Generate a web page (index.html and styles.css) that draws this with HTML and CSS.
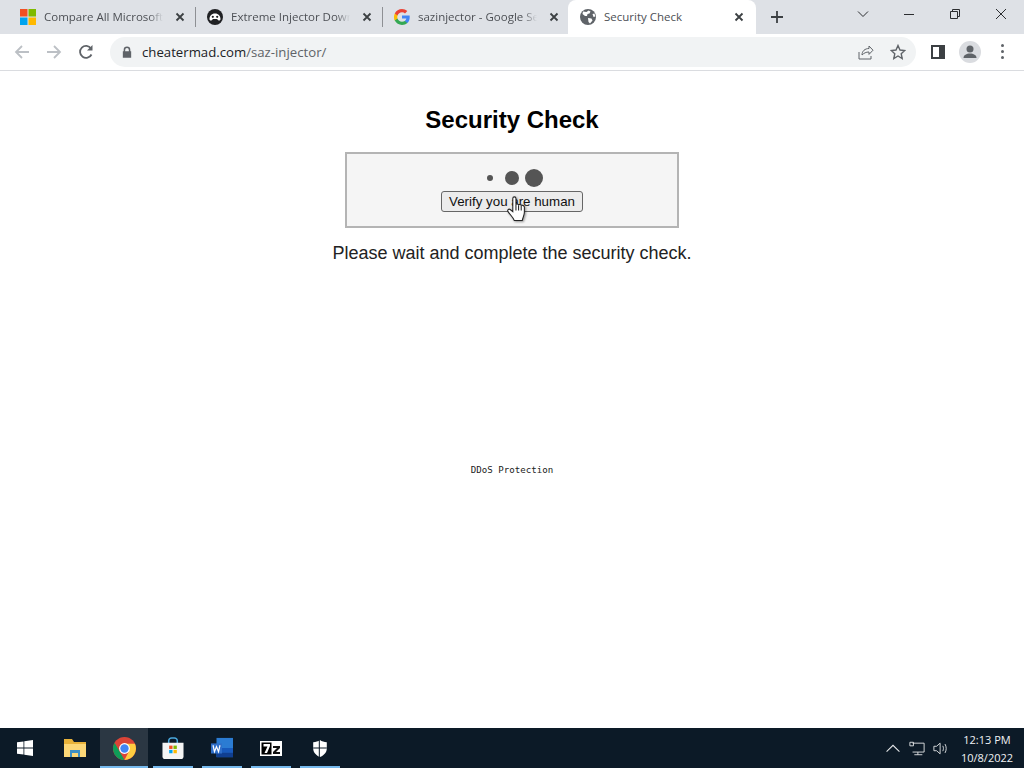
FILE: index.html
```html
<!DOCTYPE html>
<html lang="en">
<head>
    <meta charset="UTF-8">
    <title>Security Check</title>
    <link rel="stylesheet" href="styles.css">
</head>
<body>
    <div class="tabstrip">
        <div class="tab">
            <svg class="favicon" viewBox="0 0 16 16"><rect width="7.5" height="7.5" fill="#f25022"/><rect x="8.5" width="7.5" height="7.5" fill="#7fba00"/><rect y="8.5" width="7.5" height="7.5" fill="#00a4ef"/><rect x="8.5" y="8.5" width="7.5" height="7.5" fill="#ffb900"/></svg>
            <span class="tab-title">Compare All Microsoft</span>
            <svg class="tab-close" viewBox="0 0 10 10"><path d="M1.5 1.5l7 7M8.5 1.5l-7 7"/></svg>
        </div>
        <div class="tab">
            <svg class="favicon" viewBox="0 0 16 16"><circle cx="8" cy="8" r="8" fill="#202124"/><path d="M2.500 10c0-3 2-5.500 5.500-5.500s5.500 2.500 5.500 5.500c0 1.500-1.500 2-2.500 1l-1-1H6l-1 1c-1 1-2.500.5-2.500-1z" fill="#fff"/><circle cx="5.800" cy="7.800" r="1.100" fill="#202124"/><circle cx="10.200" cy="7.800" r="1.100" fill="#202124"/></svg>
            <span class="tab-title">Extreme Injector Downl</span>
            <svg class="tab-close" viewBox="0 0 10 10"><path d="M1.5 1.5l7 7M8.5 1.5l-7 7"/></svg>
        </div>
        <div class="tab">
            <svg class="favicon" viewBox="0 0 16 16"><path d="M15.700 8.200c0-.6 0-1.100-.1-1.600H8v3h4.400c-.2 1-.8 1.800-1.600 2.400v2h2.600c1.500-1.400 2.300-3.400 2.300-5.800z" fill="#4285f4"/><path d="M8 16c2.200 0 4-.7 5.400-2l-2.600-2c-.7.500-1.600.8-2.800.8-2.100 0-3.900-1.400-4.500-3.300H.8v2.100C2.100 14.200 4.900 16 8 16z" fill="#34a853"/><path d="M3.500 9.500c-.3-1-.3-2 0-3V4.400H.8c-1.100 2.200-1.100 5 0 7.200z" fill="#fbbc05"/><path d="M8 3.200c1.200 0 2.200.4 3 1.200l2.300-2.300C11.900.8 10.100 0 8 0 4.900 0 2.100 1.800.8 4.400l2.700 2.100C4.100 4.600 5.900 3.200 8 3.200z" fill="#ea4335"/></svg>
            <span class="tab-title">sazinjector - Google Search</span>
            <svg class="tab-close" viewBox="0 0 10 10"><path d="M1.5 1.5l7 7M8.5 1.5l-7 7"/></svg>
        </div>
        <div class="tab active">
            <svg class="favicon" viewBox="0 0 16 16"><circle cx="8" cy="8" r="8" fill="#5f6368"/><path d="M3 2.500l3.500.5 2-1.500 2 1-1 2-2 .5-.5 2H5L2.500 5zM8 9l3.500.5 1 2-2.500 3-1.500-1.500zM12.500 5l2-.5.8 3-1.800.5z" fill="#fff"/></svg>
            <span class="tab-title">Security Check</span>
            <svg class="tab-close" viewBox="0 0 10 10"><path d="M1.5 1.5l7 7M8.5 1.5l-7 7"/></svg>
        </div>
        <svg class="new-tab" viewBox="0 0 14 14"><path d="M7 1v12M1 7h12"/></svg>
        <div class="window-controls">
            <svg class="win-icon chevron" viewBox="0 0 12 12"><path d="M1 3.500l5 5 5-5"/></svg>
            <svg class="win-icon" viewBox="0 0 12 12"><path d="M1 6.500h10"/></svg>
            <svg class="win-icon" viewBox="0 0 12 12"><path d="M1.500 3.500h7v7h-7zM3.500 3.500v-2h7v7h-2"/></svg>
            <svg class="win-icon" viewBox="0 0 12 12"><path d="M1 1l10 10M11 1L1 11"/></svg>
        </div>
    </div>

    <div class="toolbar">
        <svg class="nav-icon disabled" viewBox="0 0 16 16"><path d="M15 8H2M8 2L2 8l6 6"/></svg>
        <svg class="nav-icon disabled" viewBox="0 0 16 16"><path d="M1 8h13M8 2l6 6-6 6"/></svg>
        <svg class="nav-icon" viewBox="0 0 16 16"><path d="M13.500 10.500A6 6 0 1 1 13 4.500"/><path class="solid" d="M14.500 1v5.500H9z"/></svg>
        <div class="omnibox">
            <svg class="lock" viewBox="0 0 12 14"><path d="M2 6V4.500a4 4 0 0 1 8 0V6h1v8H1V6zm1.800 0h4.400V4.500a2.200 2.200 0 0 0-4.400 0z"/></svg>
            <span class="url">cheatermad.com<span class="url-path">/saz-injector/</span></span>
            <svg class="omni-icon share" viewBox="0 0 16 16"><path d="M1 8v7h12v-3M4 11c0-4 3-6.500 7-6.500V2l4 4.200-4 4.200V8c-3 0-5 1-7 3z"/></svg>
            <svg class="omni-icon star" viewBox="0 0 16 16"><path d="M8 1.500l2 4.500 4.800.5-3.600 3.200 1 4.800L8 12l-4.200 2.500 1-4.800L1.200 6.500 6 6z"/></svg>
        </div>
        <svg class="side-panel" viewBox="0 0 14 14"><path d="M0 0h14v14H0zm2 2v10h6V2z" fill-rule="evenodd"/></svg>
        <div class="avatar">
            <svg viewBox="0 0 22 22"><circle cx="11" cy="8" r="3.500"/><path d="M4.500 17c0-3 3-4.500 6.500-4.500s6.500 1.500 6.500 4.500z"/></svg>
        </div>
        <div class="menu-dots"><i></i><i></i><i></i></div>
    </div>

    <main class="page">
        <h1>Security Check</h1>
        <div class="check-box">
            <div class="dots"><i class="dot small"></i><i class="dot medium"></i><i class="dot large"></i></div>
            <button class="verify-btn">Verify you are human</button>
            <svg class="cursor" viewBox="0 0 19 24"><path d="M5.500 2C5.500 0 8.500 0 8.500 2V8C8.500 7 11 7 11 8.500 11 7.500 13.500 7.500 13.500 9 13.500 8 16.500 8.500 16.500 10V15C16.500 18 15 20 14.500 23H7C6 20 3 17.500 1 14.500 0 13 1.500 11.500 3 12.500L5.500 14.500Z" fill="#fff" stroke="#222"/><path d="M8.500 8v5.500M11 8.500v5M13.500 9v4.500" stroke="#222" fill="none"/></svg>
        </div>
        <p class="wait-text">Please wait and complete the security check.</p>
        <p class="ddos">DDoS Protection</p>
    </main>

    <div class="taskbar">
        <div class="task-item start">
            <svg class="task-icon win-logo" viewBox="0 0 16 16"><path d="M0 2.300l6.500-.9v6.200H0zM7.300 1.300L16 0v7.600H7.300zM0 8.400h6.500v6.200L0 13.700zM7.300 8.400H16V16l-8.700-1.300z" fill="#fff"/></svg>
        </div>
        <div class="task-item">
            <svg class="task-icon" viewBox="0 0 22 20"><path d="M0 1h8l2 3h12v15H0z" fill="#e8b23a"/><path d="M0 6h22v13H0z" fill="#fcd777"/><path d="M6 12h10v7h-2v-4H8v4H6z" fill="#3d8fc4"/></svg>
        </div>
        <div class="task-item running active">
            <svg class="task-icon chrome" viewBox="0 0 22 22"><circle cx="11" cy="11" r="11" fill="#db4437"/><path d="M11 22A11 11 0 0 1 1.500 5.500L7 15z" fill="#0f9d58"/><path d="M11 22A11 11 0 0 0 21 6.500H11l4 7.500z" fill="#ffcd40"/><circle cx="11" cy="11" r="5.200" fill="#fff"/><circle cx="11" cy="11" r="4" fill="#4285f4"/></svg>
        </div>
        <div class="task-item running">
            <svg class="task-icon" viewBox="0 0 22 23"><path d="M6.500 7V4a3 3 0 0 1 3-3h3a3 3 0 0 1 3 3v3" fill="none" stroke="#49a7dc" stroke-width="1.600"/><path d="M0 6h22v14a3 3 0 0 1-3 3H3a3 3 0 0 1-3-3z" fill="#f4f4f4"/><rect x="7" y="9" width="3.500" height="3.500" fill="#f25022"/><rect x="11.500" y="9" width="3.500" height="3.500" fill="#7fba00"/><rect x="7" y="13.500" width="3.500" height="3.500" fill="#00a4ef"/><rect x="11.500" y="13.500" width="3.500" height="3.500" fill="#ffb900"/></svg>
        </div>
        <div class="task-item running">
            <svg class="task-icon" viewBox="0 0 24 22"><rect x="6" y="0" width="18" height="21" fill="#2b7cd3"/><rect x="6" y="11" width="18" height="5" fill="#185abd"/><rect x="6" y="16" width="18" height="5" fill="#103f91"/><rect y="6" width="12" height="11" fill="#2f6fc9"/><path d="M2.200 8l1.600 7 2.200-5.500L8.200 15l1.600-7" fill="none" stroke="#fff" stroke-width="1.300"/></svg>
        </div>
        <div class="task-item running">
            <svg class="task-icon sevenzip" viewBox="0 0 22 15"><rect width="22" height="15" fill="#fff"/><rect x="1.500" y="1.500" width="10" height="12" fill="#000"/><path d="M3.500 3h6.500v2l-3 7H4.500l3-6.500h-4z" fill="#fff"/><path d="M13 5h7v2l-4 4h4v2h-7v-2l4-4h-4z" fill="#111"/></svg>
        </div>
        <div class="task-item running">
            <svg class="task-icon shield" viewBox="0 0 18 20"><path d="M9 0c2 1.600 5 2.500 8 2.500V10c0 5-4 8.500-8 10-4-1.500-8-5-8-10V2.500C4 2.500 7 1.600 9 0z" fill="#fff"/><path d="M8.200 0v20M1 9.500h16" stroke="#0c1a27" stroke-width="1.200"/></svg>
        </div>
        <div class="tray">
            <svg class="tray-icon" viewBox="0 0 14 14"><path d="M1 10l6-6 6 6"/></svg>
            <svg class="tray-icon" viewBox="0 0 18 16"><path d="M4 2h13v10H4M10 12v3M6 15h9M1 1h4v4H1z"/></svg>
            <svg class="tray-icon" viewBox="0 0 18 16"><path d="M1 5.500h3L8 2v12l-4-3.500H1zM11 5c1 2 1 4 0 6M13.500 3c1.800 3 1.800 7 0 10"/></svg>
            <div class="clock"><span>12:13 PM</span><span>10/8/2022</span></div>
        </div>
    </div>
</body>
</html>
```

FILE: styles.css
```css
* {
    box-sizing: border-box;
}
html, body {
    margin: 0;
    padding: 0;
}
body {
    width: 1024px;
    height: 768px;
    overflow: hidden;
    display: flex;
    flex-direction: column;
    font-family: "Liberation Sans", Arial, sans-serif;
    background-color: #fff;
}

/* browser tabs */
.tabstrip {
    height: 34px;
    flex: none;
    display: flex;
    align-items: stretch;
    padding-left: 10px;
    background-color: #dee1e6;
}
.tab {
    position: relative;
    width: 187px;
    display: flex;
    align-items: center;
    padding: 0 12px 1px 10px;
    font-family: "Open Sans", "Liberation Sans", sans-serif;
    font-size: 11.500px;
    color: #4d5055;
}
.tab + .tab::before {
    content: "";
    position: absolute;
    left: -2px;
    top: 7px;
    height: 20px;
    border-left: 1px solid #8e9094;
}
.tab.active {
    width: 188px;
    margin-left: -3px;
    padding-left: 12px;
    background-color: #fff;
    border-radius: 8px 8px 0 0;
}
.tab.active::before {
    display: none;
}
.favicon {
    width: 16px;
    height: 16px;
    flex: none;
    margin-right: 8px;
}
.tab-title {
    flex: 1;
    overflow: hidden;
    white-space: nowrap;
    -webkit-mask-image: linear-gradient(to right, #000 88%, transparent);
    mask-image: linear-gradient(to right, #000 88%, transparent);
}
.tab.active .tab-title {
    -webkit-mask-image: none;
    mask-image: none;
}
.tab-close {
    width: 10px;
    height: 10px;
    flex: none;
    margin-left: 12px;
    fill: none;
    stroke: #3c4043;
    stroke-width: 1.800;
}
.new-tab {
    width: 14px;
    height: 14px;
    align-self: center;
    margin-left: 14px;
    fill: none;
    stroke: #3c4043;
    stroke-width: 1.800;
}
.window-controls {
    margin-left: auto;
    display: flex;
    align-items: center;
    margin-top: -6px;
    padding-right: 17px;
    gap: 34px;
}
.win-icon {
    width: 12px;
    height: 12px;
    fill: none;
    stroke: #2b2d30;
    stroke-width: 1;
}

/* address bar */
.toolbar {
    height: 37px;
    flex: none;
    display: flex;
    align-items: center;
    padding: 0 14px 1px 14px;
    background-color: #fff;
    border-bottom: 1px solid #dadce0;
}
.nav-icon {
    width: 16px;
    height: 16px;
    margin-right: 16px;
    fill: none;
    stroke: #5f6368;
    stroke-width: 1.800;
}
.nav-icon.disabled {
    stroke: #bcc0c5;
}
.nav-icon .solid {
    fill: #5f6368;
    stroke: none;
}
.omnibox {
    width: 806px;
    height: 30px;
    display: flex;
    align-items: center;
    padding: 0 10px 0 12px;
    background-color: #f1f3f4;
    border-radius: 15px;
}
.lock {
    width: 10px;
    height: 12px;
    margin-right: 10px;
    fill: #5f6368;
}
.url {
    flex: 1;
    font-family: "Open Sans", "Liberation Sans", sans-serif;
    font-size: 13.200px;
    color: #202124;
}
.url-path {
    color: #5f6368;
}
.omni-icon {
    width: 16px;
    height: 16px;
    margin-left: 16px;
    fill: none;
    stroke: #5f6368;
    stroke-width: 1;
}
.omni-icon.star {
    stroke-width: 1.400;
}
.side-panel {
    width: 14px;
    height: 14px;
    margin-left: 15px;
    fill: #3c4043;
}
.avatar {
    width: 22px;
    height: 22px;
    margin-left: 14px;
    border-radius: 50%;
    background-color: #dadce0;
}
.avatar svg {
    display: block;
    fill: #5f6368;
}
.menu-dots {
    margin-left: 20px;
    display: flex;
    flex-direction: column;
    gap: 3px;
}
.menu-dots i {
    width: 3px;
    height: 3px;
    border-radius: 50%;
    background-color: #5f6368;
}

/* page content */
.page {
    flex: 1;
    display: flex;
    flex-direction: column;
    align-items: center;
    background-color: #fff;
}
h1 {
    margin: 34px 0 17px 0;
    font-size: 24px;
    line-height: 30px;
    color: #000;
}
.check-box {
    position: relative;
    width: 334px;
    height: 76px;
    display: flex;
    flex-direction: column;
    align-items: center;
    padding-top: 14px;
    background-color: #f5f5f5;
    border: 2px solid #b4b4b4;
}
.dots {
    height: 20px;
    display: flex;
    align-items: center;
    margin-bottom: 3px;
}
.dot {
    border-radius: 50%;
    background-color: #555;
}
.dot.small {
    width: 6px;
    height: 6px;
    margin: 0 12px 0 6px;
}
.dot.medium {
    width: 14px;
    height: 14px;
    margin-right: 6px;
}
.dot.large {
    width: 18px;
    height: 18px;
}
.verify-btn {
    width: 142px;
    height: 21px;
    padding: 0;
    font-family: "Liberation Sans", Arial, sans-serif;
    font-size: 13.330px;
    color: #111;
    background-color: #ececec;
    border: 1px solid #666;
    border-radius: 3px;
}
.cursor {
    position: absolute;
    left: 160px;
    top: 42px;
    width: 20px;
    height: 26px;
    filter: drop-shadow(1px 1px 1px rgba(0, 0, 0, 0.4));
}
.wait-text {
    margin: 14px 0 0 0;
    font-size: 18px;
    line-height: 22px;
    color: #222;
}
.ddos {
    margin: 201px 0 0 0;
    font-family: "DejaVu Sans Mono", monospace;
    font-size: 9.130px;
    color: #222;
}

/* windows taskbar */
.taskbar {
    height: 40px;
    flex: none;
    display: flex;
    align-items: stretch;
    background-color: #0c1a27;
}
.task-item {
    position: relative;
    width: 48px;
    display: flex;
    align-items: center;
    justify-content: center;
    margin-right: 1px;
}
.task-item.start {
    width: 50px;
}
.task-item.active {
    background-color: #2b3743;
}
.task-item.running::after {
    content: "";
    position: absolute;
    left: 4px;
    right: 4px;
    bottom: 0;
    height: 2px;
    background-color: #76b9ed;
}
.task-item.active::after {
    left: 0;
    right: 0;
}
.task-icon {
    width: 22px;
    height: 22px;
}
.chrome {
    width: 23px;
    height: 23px;
}
.sevenzip {
    height: 15px;
}
.win-logo {
    width: 16px;
    height: 16px;
}
.shield {
    width: 16px;
    height: 17px;
}
.tray {
    margin-left: auto;
    display: flex;
    align-items: center;
    gap: 8px;
    padding-right: 11px;
}
.tray-icon {
    width: 16px;
    height: 15px;
    fill: none;
    stroke: #e6e8ea;
    stroke-width: 1;
}
.clock {
    width: 52px;
    margin-left: 4px;
    display: flex;
    flex-direction: column;
    align-items: center;
    gap: 3px;
    font-family: "Open Sans", "Liberation Sans", sans-serif;
    font-size: 11px;
    line-height: 15px;
    white-space: nowrap;
    color: #f0f2f4;
}
```
